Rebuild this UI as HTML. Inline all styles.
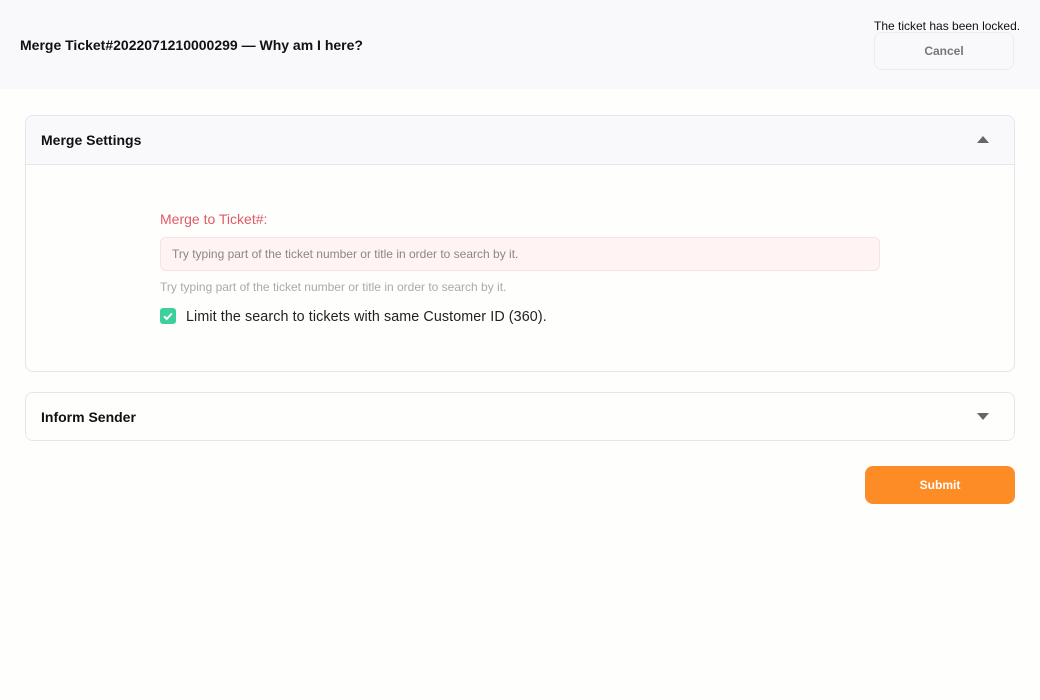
<!DOCTYPE html>
<html><head><style>
body{margin:0;width:1040px;height:700px;background:#fefefd;font-family:"Liberation Sans",sans-serif;position:relative;overflow:hidden}
.hdr{position:absolute;left:0;top:0;width:1040px;height:89px;background:#f9f9fb}
.title{position:absolute;left:20px;top:37px;font-size:14px;font-weight:bold;color:#111}
.locked{position:absolute;left:874px;top:19px;font-size:12px;color:#111}
.cancel{position:absolute;left:874px;top:32px;height:38px;border:1px solid #ececf0;border-radius:8px;box-sizing:border-box;width:140px;text-align:center;line-height:36px;font-size:12px;font-weight:bold;color:#777}
.box{position:absolute;left:25px;width:990px;border:1px solid #e6e6ea;border-radius:8px;box-sizing:border-box;overflow:hidden;background:#fefefd}
.bh{height:48px;background:#f9f9fb;position:relative}
.bh span{position:absolute;left:15px;top:16px;font-size:14px;font-weight:bold;color:#111}
.tri{position:absolute;right:25px;top:20px;width:0;height:0;border-left:6px solid transparent;border-right:6px solid transparent}
</style></head><body>
<div class="hdr"></div>
<div class="title">Merge Ticket#2022071210000299 — Why am I here?</div>
<div class="locked">The ticket has been locked.</div>
<div class="cancel">Cancel</div>
<div class="box" style="top:115px;height:257px">
<div class="bh" style="border-bottom:1px solid #e6e6ea"><span>Merge Settings</span><div class="tri" style="border-bottom:7px solid #666"></div></div>
<div style="position:absolute;left:134px;top:95px;font-size:14px;color:#e05a64">Merge to Ticket#:</div>
<div style="position:absolute;left:134px;top:121px;width:720px;height:34px;box-sizing:border-box;border:1px solid #f5e3e3;background:#fff3f3;border-radius:6px;font-size:12px;color:#888;line-height:32px;padding-left:11px">Try typing part of the ticket number or title in order to search by it.</div>
<div style="position:absolute;left:134px;top:164px;font-size:12px;color:#aaa">Try typing part of the ticket number or title in order to search by it.</div>
<div style="position:absolute;left:134px;top:192px;width:16px;height:16px;background:#3dcf9c;border-radius:3px"><svg width="16" height="16"><path d="M4 8.3l2.8 2.7 5-5.5" stroke="#fff" stroke-width="2" fill="none"/></svg></div>
<div style="position:absolute;left:160px;top:193px;font-size:14.3px;letter-spacing:0.1px;color:#222">Limit the search to tickets with same Customer ID (360).</div>
</div>
<div class="box" style="top:392px;height:49px">
<div class="bh" style="background:#fefefd"><span>Inform Sender</span><div class="tri" style="border-top:7px solid #666;top:20px"></div></div>
</div>
<div style="position:absolute;left:865px;top:466px;width:150px;height:38px;background:#fd8c26;border-radius:8px;color:#fff;font-size:12px;font-weight:bold;text-align:center;line-height:38px">Submit</div>
</body></html>
